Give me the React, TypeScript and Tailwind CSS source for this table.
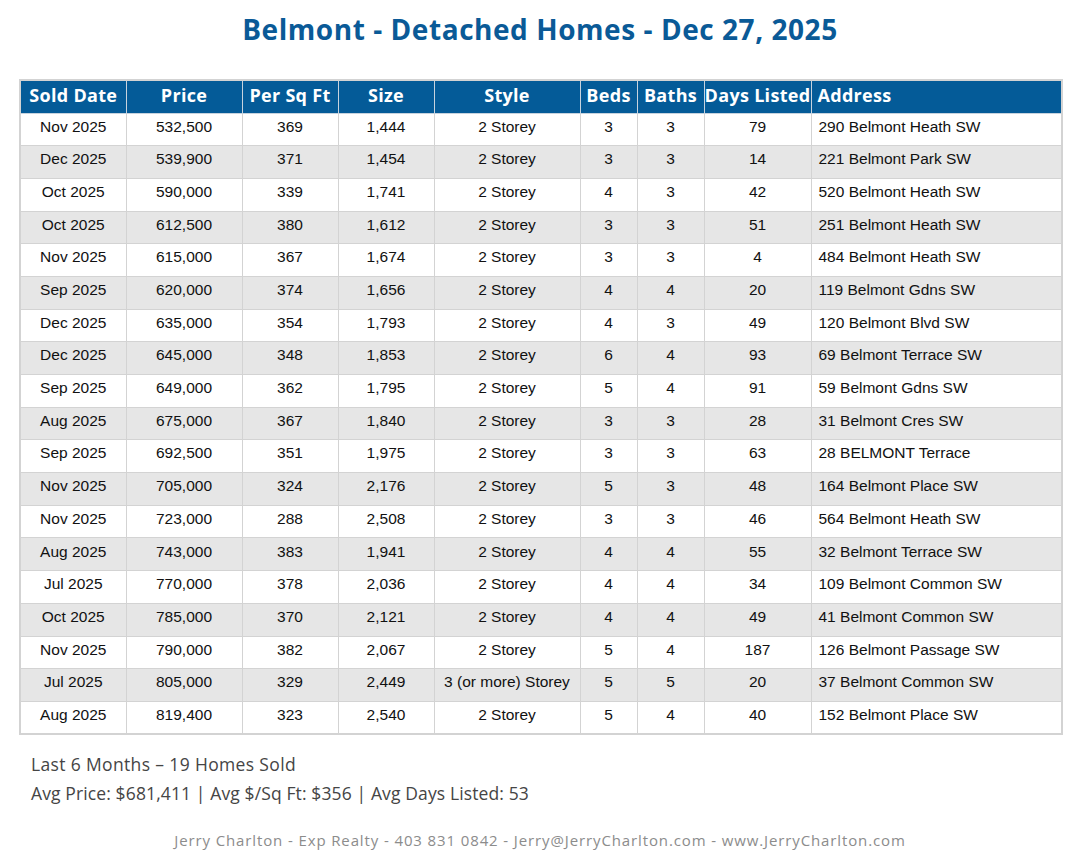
const rows: string[][] = [
  ["Nov 2025", "532,500", "369", "1,444", "2 Storey", "3", "3", "79", "290 Belmont Heath SW"],
  ["Dec 2025", "539,900", "371", "1,454", "2 Storey", "3", "3", "14", "221 Belmont Park SW"],
  ["Oct 2025", "590,000", "339", "1,741", "2 Storey", "4", "3", "42", "520 Belmont Heath SW"],
  ["Oct 2025", "612,500", "380", "1,612", "2 Storey", "3", "3", "51", "251 Belmont Heath SW"],
  ["Nov 2025", "615,000", "367", "1,674", "2 Storey", "3", "3", "4", "484 Belmont Heath SW"],
  ["Sep 2025", "620,000", "374", "1,656", "2 Storey", "4", "4", "20", "119 Belmont Gdns SW"],
  ["Dec 2025", "635,000", "354", "1,793", "2 Storey", "4", "3", "49", "120 Belmont Blvd SW"],
  ["Dec 2025", "645,000", "348", "1,853", "2 Storey", "6", "4", "93", "69 Belmont Terrace SW"],
  ["Sep 2025", "649,000", "362", "1,795", "2 Storey", "5", "4", "91", "59 Belmont Gdns SW"],
  ["Aug 2025", "675,000", "367", "1,840", "2 Storey", "3", "3", "28", "31 Belmont Cres SW"],
  ["Sep 2025", "692,500", "351", "1,975", "2 Storey", "3", "3", "63", "28 BELMONT Terrace"],
  ["Nov 2025", "705,000", "324", "2,176", "2 Storey", "5", "3", "48", "164 Belmont Place SW"],
  ["Nov 2025", "723,000", "288", "2,508", "2 Storey", "3", "3", "46", "564 Belmont Heath SW"],
  ["Aug 2025", "743,000", "383", "1,941", "2 Storey", "4", "4", "55", "32 Belmont Terrace SW"],
  ["Jul 2025", "770,000", "378", "2,036", "2 Storey", "4", "4", "34", "109 Belmont Common SW"],
  ["Oct 2025", "785,000", "370", "2,121", "2 Storey", "4", "4", "49", "41 Belmont Common SW"],
  ["Nov 2025", "790,000", "382", "2,067", "2 Storey", "5", "4", "187", "126 Belmont Passage SW"],
  ["Jul 2025", "805,000", "329", "2,449", "3 (or more) Storey", "5", "5", "20", "37 Belmont Common SW"],
  ["Aug 2025", "819,400", "323", "2,540", "2 Storey", "5", "4", "40", "152 Belmont Place SW"],
];

const cols = [
  { label: "Sold Date", w: "w-[106px]" },
  { label: "Price", w: "w-[116px]" },
  { label: "Per Sq Ft", w: "w-[96px]" },
  { label: "Size", w: "w-[96px]" },
  { label: "Style", w: "w-[146px]" },
  { label: "Beds", w: "w-[57px]" },
  { label: "Baths", w: "w-[67px]" },
  { label: "Days Listed", w: "w-[107px]" },
  { label: "Address", w: "w-[251px]" },
];

export default function App() {
  return (
    <div className="h-[868px] w-[1080px] bg-white">
      <h1 className="pt-[9px] text-center font-['Open_Sans'] text-[28px] font-bold leading-[40px] tracking-[0.55px] text-[#0a5a97]">
        Belmont - Detached Homes - Dec 27, 2025
      </h1>

      <div className="mt-[30px] px-[19px]">
        <table className="w-[1042px] table-fixed border-collapse border-2 border-[#d3d3d3]">
          <thead>
            <tr className="h-[33px] bg-[#045b98]">
              {cols.map((c, i) => (
                <th
                  key={c.label}
                  className={`${c.w} border border-[#c7d3de] px-0 pb-[4px] font-['Open_Sans'] text-[18px] font-bold leading-none tracking-[0.3px] whitespace-nowrap text-white ${
                    i === cols.length - 1 ? "pl-[6px] text-left" : "text-center"
                  }`}
                >
                  {c.label}
                </th>
              ))}
            </tr>
          </thead>
          <tbody>
            {rows.map((r, ri) => (
              <tr key={ri} className={`h-[32.7px] ${ri % 2 === 1 ? "bg-[#e6e6e6]" : "bg-white"}`}>
                {r.map((v, ci) => (
                  <td
                    key={ci}
                    className={`border border-[#d3d3d3] pb-[6px] font-['Liberation_Sans'] text-[15.5px] leading-none text-[#111] ${
                      ci === r.length - 1 ? "pl-[7px] text-left" : "text-center"
                    }`}
                  >
                    {v}
                  </td>
                ))}
              </tr>
            ))}
          </tbody>
        </table>
      </div>

      <div className="mt-[15px] pl-[31px] font-['Open_Sans'] text-[17.5px] leading-[29px] text-[#454545]">
        <p className="tracking-[0.35px]">Last 6 Months – 19 Homes Sold</p>
        <p className="tracking-[0.12px]">Avg Price: $681,411 | Avg $/Sq Ft: $356 | Avg Days Listed: 53</p>
      </div>

      <p className="mt-[21px] text-center font-['Open_Sans'] text-[15px] tracking-[0.88px] text-[#8c8c8c]">
        Jerry Charlton - Exp Realty - 403 831 0842 - Jerry@JerryCharlton.com - www.JerryCharlton.com
      </p>
    </div>
  );
}
